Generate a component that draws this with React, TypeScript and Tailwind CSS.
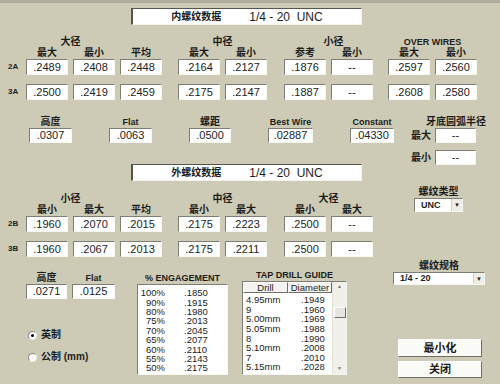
import { twMerge } from 'tailwind-merge';

const sunken =
  'border border-t-[#7f7e74] border-l-[#7f7e74] border-r-[#f7f7f1] border-b-[#f7f7f1]';
const raised =
  'border border-t-[#ffffff] border-l-[#ffffff] border-r-[#6f6e66] border-b-[#6f6e66]';

function Field({ v, className = '' }: { v: string; className?: string }) {
  return (
    <div
      className={twMerge(
        `w-[42px] h-[16px] bg-white ${sunken} flex items-center justify-center text-[11px] leading-none text-[#222]`,
        className
      )}
    >
      {v}
    </div>
  );
}

type GroupProps = {
  title: string;
  titleCls?: string;
  subs: string[];
  rows: string[][];
  className?: string;
};

function Group({ title, titleCls = '', subs, rows, className = '' }: GroupProps) {
  return (
    <div className={`flex flex-col ${className}`}>
      <div className={twMerge('h-[11px] text-[10px] leading-[11px] font-bold text-center', titleCls)}>
        {title}
      </div>
      <div className="flex gap-[5px] h-[12px]">
        {subs.map((s, i) => (
          <div key={i} className="w-[42px] text-center text-[10px] leading-[12px] font-bold">
            {s}
          </div>
        ))}
      </div>
      {rows.map((r, i) => (
        <div key={i} className={`flex gap-[5px] ${i ? 'mt-[9px]' : ''}`}>
          {r.map((v, j) => (
            <Field key={j} v={v} />
          ))}
        </div>
      ))}
    </div>
  );
}

function RowLabels({ labels }: { labels: string[] }) {
  return (
    <div className="w-[26px] flex flex-col pt-[23px]">
      {labels.map((l, i) => (
        <div
          key={l}
          className={`h-[16px] flex items-center pl-[8px] text-[8px] font-bold ${i ? 'mt-[9px]' : ''}`}
        >
          {l}
        </div>
      ))}
    </div>
  );
}

function Title({ label }: { label: string }) {
  return (
    <div className="ml-[131px] w-[231px] h-[17px] bg-white border-t border-l-2 border-t-[#55554d] border-l-[#55554d] border-b border-r border-b-[#f4f4ee] border-r-[#f4f4ee] flex items-center justify-center gap-[28px]">
      <span className="text-[10px] font-bold leading-none">{label}</span>
      <span className="text-[12px] leading-none whitespace-pre">1/4 - 20  UNC</span>
    </div>
  );
}

function Select({ value, className = '' }: { value: string; className?: string }) {
  return (
    <div className={twMerge(`h-[14px] bg-white ${sunken} flex items-center`, className)}>
      <span className="flex-1 pl-[6px] text-[9px] font-bold leading-none">{value}</span>
      <div className="w-[11px] h-full bg-[#eeede6] border-l border-l-[#d0cfc8] flex items-center justify-center">
        <span className="text-[6px] leading-none">▼</span>
      </div>
    </div>
  );
}

function Radio({ label, checked }: { label: string; checked?: boolean }) {
  return (
    <div className="flex items-center h-[12px]">
      <div className="ml-[2px] w-[9px] h-[9px] rounded-full bg-white border border-t-[#8a8a80] border-l-[#8a8a80] border-b-[#eeeeea] border-r-[#eeeeea] flex items-center justify-center">
        {checked && <div className="w-[3px] h-[3px] rounded-full bg-black" />}
      </div>
      <span className="ml-[4px] text-[10px] font-bold leading-none">{label}</span>
    </div>
  );
}

const stats: [string, string, string][] = [
  ['高度', '.0307', 'w-[43px]'],
  ['Flat', '.0063', 'w-[43px]'],
  ['螺距', '.0500', 'w-[42px]'],
  ['Best Wire', '.02887', 'w-[45px]'],
  ['Constant', '.04330', 'w-[44px]'],
];

const engagement = [
  ['100%', '.1850'],
  ['90%', '.1915'],
  ['80%', '.1980'],
  ['75%', '.2013'],
  ['70%', '.2045'],
  ['65%', '.2077'],
  ['60%', '.2110'],
  ['55%', '.2143'],
  ['50%', '.2175'],
];

const drills = [
  ['4.95mm', '.1949'],
  ['9', '.1960'],
  ['5.00mm', '.1969'],
  ['5.05mm', '.1988'],
  ['8', '.1990'],
  ['5.10mm', '.2008'],
  ['7', '.2010'],
  ['5.15mm', '.2028'],
];

export default function App() {
  return (
    <div className="w-[500px] h-[384px] overflow-hidden bg-[#cdcbb5] text-[#1c1c1c] flex flex-col font-['Liberation_Sans','Noto_Sans_CJK_SC',sans-serif]">
      <div className="h-[3px] bg-[#aeac9a]" />

      {/* 内螺纹 */}
      <div className="mt-[5px]">
        <Title label="内螺纹数据" />
      </div>

      <div className="mt-[11px] flex">
        <RowLabels labels={['2A', '3A']} />
        <Group
          title="大径"
          titleCls="w-[89px]"
          subs={['最大', '最小', '平均']}
          rows={[
            ['.2489', '.2408', '.2448'],
            ['.2500', '.2419', '.2459'],
          ]}
        />
        <Group
          className="ml-[16px]"
          title="中径"
          subs={['最大', '最小']}
          rows={[
            ['.2164', '.2127'],
            ['.2175', '.2147'],
          ]}
        />
        <Group
          className="ml-[17px]"
          title="小径"
          titleCls="pl-[10px]"
          subs={['参考', '最小']}
          rows={[
            ['.1876', '--'],
            ['.1887', '--'],
          ]}
        />
        <Group
          className="ml-[15px]"
          title="OVER WIRES"
          titleCls="text-[9px]"
          subs={['最大', '最小']}
          rows={[
            ['.2597', '.2560'],
            ['.2608', '.2580'],
          ]}
        />
      </div>

      {/* 中间参数 */}
      <div className="mt-[16px] flex">
        <div className="ml-[29px] flex gap-[37px]">
          {stats.map(([l, v, w]) => (
            <div key={l} className="flex flex-col items-center">
              <div
                className={`h-[12px] leading-[12px] font-bold ${
                  /[a-z]/i.test(l) ? 'text-[9px]' : 'text-[10px]'
                }`}
              >
                {l}
              </div>
              <Field v={v} className={`${w} h-[15px]`} />
            </div>
          ))}
        </div>
        <div className="ml-[11px] flex flex-col">
          <div className="h-[12px] pl-[21px] text-[10px] leading-[12px] font-bold">牙底圆弧半径</div>
          <div className="flex items-center">
            <span className="ml-[6px] w-[24px] text-[10px] font-bold">最大</span>
            <Field v="--" className="w-[41px] h-[15px]" />
          </div>
          <div className="mt-[7px] flex items-center">
            <span className="ml-[6px] w-[24px] text-[10px] font-bold">最小</span>
            <Field v="--" className="w-[41px] h-[15px]" />
          </div>
        </div>
      </div>

      {/* 外螺纹 */}
      <div className="-mt-[1px]">
        <Title label="外螺纹数据" />
      </div>

      <div className="mt-[5px] flex items-start">
        <div className="mt-[7px] flex">
          <RowLabels labels={['2B', '3B']} />
          <Group
            title="小径"
            titleCls="w-[89px]"
            subs={['最小', '最大', '平均']}
            rows={[
              ['.1960', '.2070', '.2015'],
              ['.1960', '.2067', '.2013'],
            ]}
          />
          <Group
            className="ml-[16px]"
            title="中径"
            subs={['最小', '最大']}
            rows={[
              ['.2175', '.2223'],
              ['.2175', '.2211'],
            ]}
          />
          <Group
            className="ml-[17px]"
            title="大径"
            subs={['最小', '最大']}
            rows={[
              ['.2500', '--'],
              ['.2500', '--'],
            ]}
          />
        </div>
        <div className="ml-[41px] flex flex-col items-center">
          <div className="h-[12px] text-[10px] leading-[12px] font-bold">螺纹类型</div>
          <Select value="UNC" className="w-[49px]" />
        </div>
      </div>

      {/* 底部 */}
      <div className="mt-[2px] flex items-start">
        <div className="ml-[26px] mt-[13px] flex flex-col">
          <div className="flex gap-[5px]">
            <div className="flex flex-col items-center">
              <div className="h-[12px] text-[10px] leading-[12px] font-bold">高度</div>
              <Field v=".0271" className="w-[41px] h-[15px]" />
            </div>
            <div className="flex flex-col items-center">
              <div className="h-[12px] text-[9px] leading-[12px] font-bold">Flat</div>
              <Field v=".0125" className="w-[43px] h-[15px]" />
            </div>
          </div>
          <div className="mt-[30px]">
            <Radio label="英制" checked />
          </div>
          <div className="mt-[10px]">
            <Radio label="公制 (mm)" />
          </div>
        </div>

        <div className="ml-[22px] mt-[13px] flex flex-col">
          <div className="h-[12px] text-[9px] leading-[12px] font-bold text-center">% ENGAGEMENT</div>
          <div className={`w-[91px] h-[91px] bg-white ${sunken} pt-[3px]`}>
            {engagement.map(([p, v]) => (
              <div key={p} className="flex h-[9.4px] items-center text-[9.5px] leading-[9px]">
                <span className="w-[27px] text-right">{p}</span>
                <span className="ml-[19px]">{v}</span>
              </div>
            ))}
          </div>
        </div>

        <div className="ml-[14px] mt-[10px] flex flex-col">
          <div className="h-[12px] text-[9px] leading-[12px] font-bold text-center">TAP DRILL GUIDE</div>
          <div className={`w-[105px] h-[94px] bg-white ${sunken} flex`}>
            <div className="flex-1 flex flex-col">
              <div className="flex h-[11px] text-[9.5px] leading-none">
                <div className={`w-[45px] ${raised} bg-[#f3f3ef] flex items-center justify-center`}>Drill</div>
                <div className={`flex-1 ${raised} bg-[#f3f3ef] flex items-center justify-center`}>Diameter</div>
              </div>
              <div className="pt-[2px]">
                {drills.map(([d, v]) => (
                  <div key={d + v} className="flex h-[9.6px] items-center text-[9.5px] leading-[9px]">
                    <span className="w-[43px] pl-[3px]">{d}</span>
                    <span className="ml-[15px]">{v}</span>
                  </div>
                ))}
              </div>
            </div>
            <div className="w-[14px] bg-[#f1f0ea] border-l border-l-[#e2e1da] flex flex-col items-center">
              <span className="mt-[2px] text-[5px] leading-none text-[#777]">▲</span>
              <div className={`mt-[18px] w-[12px] h-[11px] ${raised} bg-[#e6e5de]`} />
              <span className="mt-auto mb-[3px] text-[5px] leading-none text-[#777]">▼</span>
            </div>
          </div>
        </div>

        <div className="ml-[46px] flex flex-col">
          <div className="h-[13px] text-[10px] leading-[13px] font-bold text-center">螺纹规格</div>
          <Select value="1/4 - 20" className="w-[92px] h-[13px]" />
          <button
            className={`ml-[5px] mt-[54px] w-[84px] h-[18px] bg-[#fbfbf8] ${raised} text-[11px] font-bold leading-none`}
          >
            最小化
          </button>
          <button
            className={`ml-[5px] mt-[4px] w-[84px] h-[17px] bg-[#fbfbf8] ${raised} text-[11px] font-bold leading-none`}
          >
            关闭
          </button>
        </div>
      </div>
    </div>
  );
}
